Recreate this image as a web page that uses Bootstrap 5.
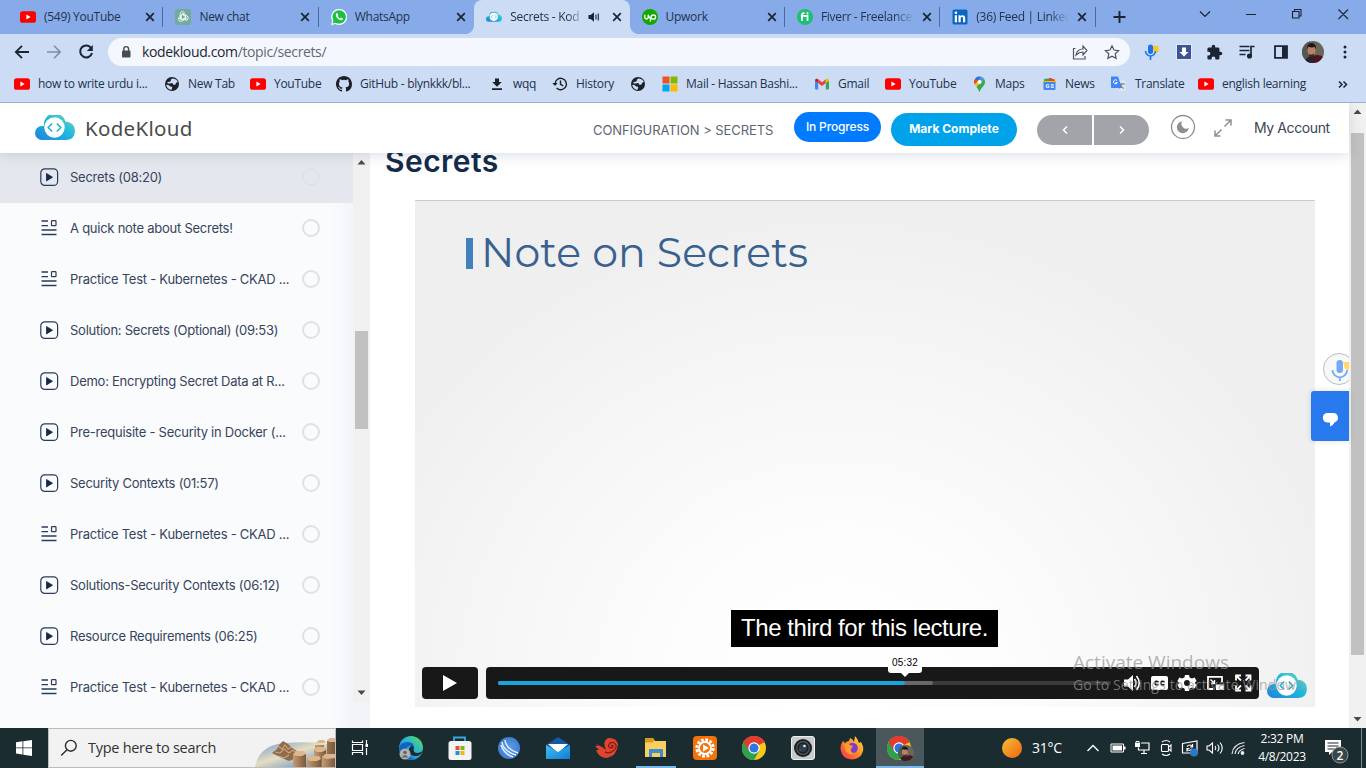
<!DOCTYPE html>
<html lang="en">
<head>
<meta charset="utf-8">
<meta name="viewport" content="width=device-width, initial-scale=1">
<title>Secrets - KodeKloud</title>
<link href="https://cdn.jsdelivr.net/npm/bootstrap@5.3.0/dist/css/bootstrap.min.css" rel="stylesheet">
<style>
body{height:768px;overflow:hidden;font-family:"Noto Sans","Open Sans",sans-serif;font-size:12px;line-height:1;color:#1b2a41}
svg{display:block;flex:none}
.ui{font-family:"Open Sans","Noto Sans",sans-serif;font-size:12px;letter-spacing:-.28px;color:#22324c;white-space:nowrap}
/* browser chrome */
.tabstrip{height:34px;background:#86abe8;padding-left:8px}
.btab{width:155.4px;height:34px;padding-left:12px;position:relative}
.btab .ttl{margin-left:8px;width:93px;overflow:hidden;line-height:20px}
.btab .ttl.short{width:74px}
.btab.sep::after{content:"";position:absolute;right:0;top:7px;width:1px;height:20px;background:#4c6a9c}
.btab.on{background:#ccdcf5;border-radius:8px 8px 0 0}
.btab.on::before,.btab.on::after{content:"";position:absolute;bottom:0;width:8px;height:8px}
.btab.on::before{left:-8px;background:radial-gradient(circle at 0 0,#86abe8 7.5px,#ccdcf5 8px)}
.btab.on::after{right:-8px;background:radial-gradient(circle at 100% 0,#86abe8 7.5px,#ccdcf5 8px)}
.fade-end{-webkit-mask-image:linear-gradient(90deg,#000 78%,transparent)}
.toolbar{height:36px;background:#ccdcf5;display:grid;grid-template-columns:12px 32px 32px 32px 1022px 38px 34px 32px 31px 32px 31px 34px;align-items:center}
.pill{height:28px;background:#f4f8fe;border-radius:14px;padding:0 10px 0 12px}
.url{font-size:14px;margin-left:9px;color:#1d2530;letter-spacing:-.37px}
.url span{color:#5f6875}
.marks{height:33px;background:#ccdcf5;border-bottom:1px solid #9dafcf;display:grid;grid-template-columns:150px 86px 86px 153px 63px 78px 32px 152px 71px 88px 69px 68px 88px 140px 30px;padding:0 0 4px 14px;align-items:center}
.marks>div{display:flex;align-items:center;gap:8px}
/* page */
.page{height:625px;background:#fff}
.sitebar{height:50px;background:#fff;z-index:3;position:relative;box-shadow:0 2px 12px rgba(60,70,110,.18);font-family:Inter,sans-serif}
.brand{font-family:"Noto Sans",sans-serif;font-weight:400;font-size:20.5px;color:#4b4b4d;margin-left:10px;letter-spacing:.3px}
.crumb{font-size:13px;color:#5d6673;width:201px;letter-spacing:-.08px}
.prog{width:87px;height:30px;border-radius:15px;background:#007bff;color:#fff;font-size:12px;font-weight:500;letter-spacing:-.15px;margin:-3px 10px 0 0}
.done{width:126px;height:33px;border-radius:17px;background:#00a3e9;color:#fff;font-size:12px;font-weight:700;margin:2px 20px 0 0}
.pn{width:55px;height:30px;background:#a2a4a9;margin-right:2px}
.acct{font-size:14px;letter-spacing:-.4px;color:#3b4556;margin-left:21px;width:95px}
.side{width:353px;background:#fafbfd;font-family:Inter,sans-serif;font-size:13px;color:#36445c;letter-spacing:-.25px;box-shadow:inset -24px 0 24px -20px rgba(90,100,150,.07)}
.les{height:51px;padding:0 32px 2px 39px}
.les.cur{background:#e4e8ee;height:50px}
.les span{margin-left:11px;width:232px;white-space:nowrap;line-height:18px}
.ring{width:18px;height:18px;border:2px solid #dfe1e5;border-radius:50%}
.track{background:#f1f1f1}
.sthumb{top:178px;left:2px;width:13px;height:98px;background:#c1c1c1}
.pthumb{top:30px;left:2px;width:13px;height:522px;background:#c1c1c1}
.lesson-title{font:600 30px/34px Inter,sans-serif;letter-spacing:.45px;color:#142a49;margin:-9px 0 0 15px;height:34px}
.video{width:900px;height:507px;margin:22px 0 0 45px;border-top:1px solid #cdcdcd;background:radial-gradient(ellipse 520px 480px at 47% 96%,#fff 0,#fdfdfd 30%,#f5f5f5 72%,#efefef 100%)}
.slide-row{padding:26px 0 0 51px}
.slide-h{font:400 41px/50px Montserrat,Inter,sans-serif;letter-spacing:.15px;color:#38618f}
.slidebar{width:7px;height:31px;background:#4280bd;margin:3px 8px 0 0}
.caption-box{left:316px;top:409px;width:267px;height:37px;background:#000;color:#fff;font:24px/35px "Liberation Sans",sans-serif;letter-spacing:-.44px;text-align:center;white-space:nowrap}
.ctl{left:7px;top:466px;right:7px;height:32px}
.ctl .pb{width:56px;height:32px;border-radius:4px;background:#181818}
.ctl .bar{width:773px;height:32px;border-radius:4px;background:#181818;margin-left:8px;padding-left:12px}
.rail{width:613px;height:4px;background:#3b3b3b;border-radius:2px;margin-right:11px}
.rail .buf{width:435px;height:4px;background:#696969;border-radius:2px}
.rail .play{width:407px;height:4px;background:#18a4dc;border-radius:2px}
.tip{left:473px;top:453px;width:34px;height:19px;background:#fff;border-radius:3px;font:10px/18px "Liberation Sans",sans-serif;text-align:center;color:#000;letter-spacing:.2px}
.tip::after{content:"";position:absolute;left:13px;top:19px;border:4px solid transparent;border-top:4px solid #fff;border-bottom:0}
.water{left:1073px;top:652px;z-index:6;color:rgba(150,150,150,.72);font-family:"Open Sans",sans-serif;white-space:nowrap}
.water div:first-child{font-size:19px;line-height:21px}
.water div:last-child{font-size:14px;line-height:24px;letter-spacing:.12px}
.mic{left:1323px;top:353px;width:26px;height:32px;overflow:hidden;z-index:4}
.chatbox{left:1311px;top:391px;width:38px;height:50px;border-radius:3px 0 0 3px;background:#2878ee;z-index:4;box-shadow:0 0 6px rgba(0,0,0,.12)}
/* taskbar */
.taskbar{height:40px;background:#1b2c31;color:#fff}
.find{width:288px;height:40px;background:#f2f2f2;border:1px solid #bdbdbd;padding-left:11px;font-size:14.5px;color:#333}
.apps>div{width:49px;height:40px;display:flex;align-items:center;justify-content:center;position:relative}
.apps .act{width:48px;background:#4a585c}
.apps .act::after,.apps .run::after{content:"";position:absolute;left:0;right:0;bottom:0;height:2px;background:#76b9ed}
.apps .run::after{left:5px;right:4px}
.tray{display:grid;grid-template-columns:24px 25px 24px 24px 24px 25px}
.tray>svg{margin:auto}
</style>
</head>
<body>
<svg width="0" height="0" class="position-absolute">
<defs>
<linearGradient id="cg" x1="0" y1="1" x2="1" y2="0"><stop offset="0" stop-color="#1e82dc"/><stop offset=".55" stop-color="#1fb9dc"/><stop offset="1" stop-color="#7fd8c0"/></linearGradient>
<linearGradient id="sun" x1="0" y1="0" x2="1" y2="1"><stop offset="0" stop-color="#f6bf3a"/><stop offset="1" stop-color="#f0640a"/></linearGradient>
<linearGradient id="edg" x1="0" y1="1" x2="1" y2="0"><stop offset="0" stop-color="#1468c7"/><stop offset=".5" stop-color="#27aee0"/><stop offset="1" stop-color="#5fe04e"/></linearGradient>
<linearGradient id="fox" x1="1" y1="0" x2="0" y2="1"><stop offset="0" stop-color="#ffe14a"/><stop offset=".5" stop-color="#ff8a23"/><stop offset="1" stop-color="#f5245f"/></linearGradient>
<linearGradient id="ml" x1="0" y1="0" x2="1" y2="1"><stop offset="0" stop-color="#3cc3f5"/><stop offset="1" stop-color="#137ad4"/></linearGradient>
<linearGradient id="col" x1="0" x2="1"><stop offset="0" stop-color="#c49c74"/><stop offset="1" stop-color="#7c5737"/></linearGradient>
<linearGradient id="sea" x1="0" y1="0" x2="1" y2="1"><stop offset="0" stop-color="#6c9bd2"/><stop offset=".45" stop-color="#e6ddc0"/><stop offset="1" stop-color="#3f7fd6"/></linearGradient>
<radialGradient id="blu"><stop offset="0" stop-color="#62a0ea"/><stop offset="1" stop-color="#3f7dd0"/></radialGradient>
<symbol id="yt" viewBox="0 0 16 16"><rect y="2.2" width="16" height="11.6" rx="2.6" fill="#f00"/><path d="M6.4 5.6v4.8L10.6 8z" fill="#fff"/></symbol>
<symbol id="x" viewBox="0 0 10 10"><path d="M1.2 1.2l7.6 7.6M8.8 1.2L1.2 8.8" stroke="#1b2433" stroke-width="1.7"/></symbol>
<symbol id="cloud" viewBox="0 0 40 26"><path d="M7 25a7 7 0 0 1 0-14h2a11 11 0 0 1 21.500-4.500q9.500 1 9.500 9.500-.5 8.500-8.500 9z" fill="url(#cg)"/><circle cx="19.500" cy="12.500" r="10.200" fill="#fff"/><path d="M17.200 8.500l-4 4 4 4M21.800 8.500l4 4-4 4" fill="none" stroke="#25b0d8" stroke-width="1.600"/></symbol>
<symbol id="globe" viewBox="0 0 16 16"><circle cx="8" cy="8" r="7" fill="#1d2026"/><path d="M9.500 2.600Q6 3 7 4.600q-.8 1.600-3 1.200L3.200 7Q5 8 7 7.200q2-.4 2 1.300 2.500 1 3-1.200.5-1.300 2-1.300-1-2.700-4.500-3.400zM2.200 9q2-.5 3.200.8 1 1 2.600.8.900 1.300-.8 3.300Q3 13 2.200 9z" fill="#ccdcf5"/></symbol>
<symbol id="chr" viewBox="0 0 24 24"><circle cx="12" cy="12" r="12" fill="#fbc719"/><path d="M12 12L1.600 6A12 12 0 0 1 22.400 6z" fill="#e33b2e"/><path d="M1.600 6A12 12 0 0 0 12 24l5.200-9L12 12z" fill="#2ca24c"/><path d="M1.600 6l5.200 9L12 6.500h10.600L22.400 6A12 12 0 0 0 1.600 6z" fill="#e33b2e"/><circle cx="12" cy="12" r="5.700" fill="#fff"/><circle cx="12" cy="12" r="4.500" fill="#2d76e8"/></symbol>
<symbol id="face" viewBox="0 0 22 22"><clipPath id="fc"><circle cx="11" cy="11" r="11"/></clipPath><g clip-path="url(#fc)"><path d="M0 0h22v22H0z" fill="#6c665a"/><path d="M0 0h8v22H0z" fill="#55584e"/><path d="M2 22q2-7 9-7 8-3 12 3v4z" fill="#4a1622"/><path d="M4 19l4-4 4 4-2 3H4z" fill="#262430"/><ellipse cx="9.500" cy="9.500" rx="4" ry="5.800" fill="#b98267"/><path d="M5.200 8.500Q4.500 2 9.800 2q5 .5 3.900 6.500l-.9-2.500q-3.500 1-6.700-.5z" fill="#1d1919"/><path d="M6.500 13q3 1.500 6-.5-1 4-3 3.800-2 0-3-3.300z" fill="#3b2822"/></g></symbol>
<symbol id="pl" viewBox="0 0 20 20"><rect x="1.800" y="1.800" width="16.800" height="16.600" rx="4" fill="none" stroke="#2a3b5c" stroke-width="1.200"/><path d="M7.500 6.500v7.400l6-3.700z" fill="#142848" stroke="#142848" stroke-width=".8" stroke-linejoin="round"/></symbol>
<symbol id="doc" viewBox="0 0 20 20"><path d="M2.500 3h6.500M2.500 7.600h6.500M2.500 12h15M2.500 16.500h15" stroke="#2a3b5c" stroke-width="1.300" fill="none"/><rect x="12.500" y="2.700" width="4.500" height="5" rx=".8" fill="none" stroke="#2a3b5c" stroke-width="1.200"/></symbol>
</defs>
</svg>

<header>
<div class="tabstrip d-flex ui">
  <div class="btab sep d-flex align-items-center"><svg width="16" height="16"><use href="#yt"/></svg><div class="ttl">(549) YouTube</div><svg width="10" height="10" class="ms-2"><use href="#x"/></svg></div>
  <div class="btab sep d-flex align-items-center"><svg width="16" height="16" viewBox="0 0 16 16"><rect width="16" height="16" rx="2" fill="#74aa9c"/><g fill="none" stroke="#f4fffb" stroke-width=".8"><path d="M5 9.500V5a2.500 2.500 0 0 1 4.600-1.200L6.300 5.700v4.200l1.700 1 3.500-2"/><path d="M5 9.500V5a2.500 2.500 0 0 1 4.600-1.200L6.300 5.700v4.200l1.700 1 3.500-2" transform="rotate(120 8 8)"/><path d="M5 9.500V5a2.500 2.500 0 0 1 4.600-1.200L6.300 5.700v4.200l1.700 1 3.500-2" transform="rotate(240 8 8)"/></g></svg><div class="ttl">New chat</div><svg width="10" height="10" class="ms-2"><use href="#x"/></svg></div>
  <div class="btab d-flex align-items-center"><svg width="16" height="16" viewBox="0 0 16 16"><path d="M0 16l1.200-4.200A8 8 0 1 1 4.500 15z" fill="#fff"/><path d="M1.500 14.500l.9-3.200A6.700 6.700 0 1 1 4.800 13.700z" fill="#19c245"/><path d="M5.300 4.200l1.200.1.800 1.900-.7.900q.8 1.600 2.400 2.300l.9-1 1.900.9v1.300c-1.200 1.300-3.300.7-5.100-1S4.200 5.500 5.300 4.200z" fill="#fff"/></svg><div class="ttl">WhatsApp</div><svg width="10" height="10" class="ms-2"><use href="#x"/></svg></div>
  <div class="btab on d-flex align-items-center"><svg width="16" height="12" viewBox="0 0 40 26"><use href="#cloud"/></svg><div class="ttl short fade-end">Secrets - Kod</div><svg width="12" height="12" viewBox="0 0 12 12" class="ms-1"><path d="M.5 4h2.200L6 1.200v9.600L2.700 8H.5z" fill="#1b2433"/><path d="M8 3.500v5M10.300 2.500v7" stroke="#1b2433" stroke-width="1.100"/></svg><svg width="10" height="10" class="ms-auto me-2"><use href="#x"/></svg></div>
  <div class="btab sep d-flex align-items-center"><svg width="16" height="16" viewBox="0 0 16 16"><circle cx="8" cy="8" r="8" fill="#14a800"/><path d="M2.800 5.800v2.500a1.700 1.700 0 0 0 3.400 0V5.800q1 3.500 3 4.500M8.200 12.500l1-4.500a2.200 2.200 0 1 1 2.200 2.200q-1.500 0-3-2" fill="none" stroke="#fff" stroke-width="1.300"/></svg><div class="ttl">Upwork</div><svg width="10" height="10" class="ms-2"><use href="#x"/></svg></div>
  <div class="btab sep d-flex align-items-center"><svg width="16" height="16" viewBox="0 0 16 16"><circle cx="8" cy="8" r="8" fill="#1dbf73"/><path d="M5 12V6q0-2 2.500-1.800M3.800 6.800h6.700V12" fill="none" stroke="#fff" stroke-width="1.800"/><circle cx="10.500" cy="4.300" r="1.100" fill="#fff"/></svg><div class="ttl fade-end">Fiverr - Freelance</div><svg width="10" height="10" class="ms-2"><use href="#x"/></svg></div>
  <div class="btab sep d-flex align-items-center"><svg width="16" height="16" viewBox="0 0 16 16"><rect x=".5" y=".5" width="15" height="15" rx="1.500" fill="#0a66c2"/><path d="M2.800 6.200H5v7H2.800zM6.500 6.200h2v1c.8-1.500 4.700-1.800 4.700 1.600v4.400H11V9.500c0-2-2.300-1.900-2.300 0v3.700H6.500z" fill="#fff"/><circle cx="3.900" cy="3.800" r="1.300" fill="#fff"/></svg><div class="ttl fade-end">(36) Feed | Linked</div><svg width="10" height="10" class="ms-2"><use href="#x"/></svg></div>
  <svg width="262" height="34" viewBox="-3 0 262 34" fill="none" stroke="#1b2433"><path d="M14.500 17h12M20.500 11v12" stroke-width="1.900"/><path d="M101 11.500l5 5 5-5M147 14.500h10M193.500 11.500h6.500v6.500h-6.500zM195.500 11.500v-2h6.500v6.500h-2M239.500 9.500l9.500 9.500M249 9.500L239.500 19" stroke-width="1.100"/></svg>
</div>
<div class="toolbar ui">
  <span></span>
  <svg width="20" height="20" viewBox="0 0 20 20" fill="none" stroke="#1b2433" stroke-width="1.800"><path d="M17 10H4M10 3.800L3.800 10l6.200 6.200"/></svg>
  <svg width="20" height="20" viewBox="0 0 20 20" fill="none" stroke="#7f8ca4" stroke-width="1.600"><path d="M3 10h13M10 3.800l6.200 6.200-6.200 6.200"/></svg>
  <svg width="20" height="20" viewBox="0 0 20 20"><path d="M15.300 6.300A6 6 0 1 0 16 11" fill="none" stroke="#1b2433" stroke-width="2"/><path d="M16.800 3v6h-6z" fill="#1b2433"/></svg>
  <div class="pill d-flex align-items-center">
    <svg width="13" height="14" viewBox="0 0 13 14"><rect x="2" y="5.500" width="8.500" height="7" rx="1" fill="#474c55"/><path d="M3.800 6V4a2.400 2.400 0 0 1 4.800 0v2" fill="none" stroke="#474c55" stroke-width="1.400"/></svg>
    <span class="url">kodekloud.com<span>/topic/secrets/</span></span>
    <svg width="50" height="18" viewBox="0 0 50 18" class="ms-auto" fill="none" stroke="#4d535e" stroke-width="1.200"><path d="M5.500 5.500H3.500v10.500h11.500v-3M6 12q1-6 7-6V3l4 4.500-4 4.500V9q-4 0-7 3z"/><path d="M42 2.800l2 4.200 4.600.6-3.400 3.200.9 4.600-4.100-2.200-4.100 2.200.9-4.600L35.400 7.600l4.600-.6z"/></svg>
  </div>
  <svg width="18" height="18" viewBox="0 0 18 18" class="ms-auto me-2"><path d="M10.500 3h6v6l-3 0-3-2z" fill="#ffc61a"/><rect x="6" y="1.500" width="5" height="9.500" rx="2.500" fill="#1a73e8"/><path d="M3.500 8a5 5 0 0 0 10 0M8.500 13v4" stroke="#1a73e8" stroke-width="1.600" fill="none"/></svg>
  <svg width="16" height="16" viewBox="0 0 16 16" class="my-auto ms-2"><rect x=".5" y=".5" width="15" height="15" fill="#3c5491" stroke="#dfe8f7"/><path d="M6 3.500h4V8h2.500L8 12.500 3.500 8H6z" fill="#fff"/></svg>
  <svg width="17" height="17" viewBox="0 0 24 24" class="my-auto ms-1"><path d="M20.500 11H19V7a2 2 0 0 0-2-2h-4V3.500a2.500 2.500 0 0 0-5 0V5H4a2 2 0 0 0-2 2v3.800h1.500a2.700 2.700 0 0 1 0 5.400H2V20a2 2 0 0 0 2 2h3.800v-1.500a2.700 2.700 0 0 1 5.400 0V22H17a2 2 0 0 0 2-2v-4h1.500a2.500 2.500 0 0 0 0-5z" fill="#1b2433"/></svg>
  <svg width="18" height="16" viewBox="0 0 18 16" class="my-auto ms-1" fill="none" stroke="#1b2433" stroke-width="1.700"><path d="M1.500 2.500h10M1.500 6.500h10M1.500 10.500h6M13 12V2.500h3.500"/><circle cx="11.500" cy="12" r="1.700" fill="#1b2433"/></svg>
  <svg width="16" height="16" viewBox="0 0 16 16" class="m-auto"><path d="M2 2.200h12v11.600H2z" fill="none" stroke="#1b2433" stroke-width="1.800"/><path d="M9 2h5v12H9z" fill="#1b2433"/></svg>
  <svg width="22" height="22" class="m-auto"><use href="#face"/></svg>
  <svg width="6" height="16" viewBox="0 0 6 16" class="m-auto" fill="#1b2433"><circle cx="3" cy="3" r="1.500"/><circle cx="3" cy="8" r="1.500"/><circle cx="3" cy="13" r="1.500"/></svg>
</div>
<div class="marks ui">
  <div><svg width="16" height="16"><use href="#yt"/></svg>how to write urdu i...</div>
  <div><svg width="16" height="16"><use href="#globe"/></svg>New Tab</div>
  <div><svg width="16" height="16"><use href="#yt"/></svg>YouTube</div>
  <div><svg width="16" height="16" viewBox="0 0 16 16"><path d="M8 0C3.580 0 0 3.580 0 8c0 3.540 2.290 6.530 5.470 7.590.4.070.55-.17.55-.38v-1.490c-2.010.37-2.530-.49-2.690-.94-.09-.23-.48-.94-.82-1.130-.28-.15-.68-.52-.01-.53.630-.01 1.080.58 1.230.82.720 1.210 1.870.87 2.330.66.070-.52.280-.87.510-1.070-1.780-.2-3.640-.89-3.640-3.950 0-.87.310-1.590.82-2.150-.08-.2-.36-1.020.08-2.120 0 0 .67-.21 2.200.82a7.500 7.500 0 0 1 4 0c1.530-1.040 2.200-.82 2.200-.82.440 1.100.16 1.920.08 2.120.51.560.82 1.270.82 2.150 0 3.070-1.870 3.750-3.650 3.950.29.250.54.730.54 1.480v2.190c0 .21.150.46.55.38A8 8 0 0 0 16 8c0-4.420-3.580-8-8-8z" fill="#1b2027"/></svg>GitHub - blynkkk/bl...</div>
  <div><svg width="16" height="16" viewBox="0 0 16 16"><path d="M6 2.500h4v3.500h2.800L8 10.800 3.200 6H6zM3 12.300h10V14H3z" fill="#1b2027"/></svg>wqq</div>
  <div><svg width="16" height="16" viewBox="0 0 16 16"><path d="M3 8a5.700 5.700 0 1 1 1.600 4M8.500 4.500V8.300l2.700 1.600" fill="none" stroke="#1b2027" stroke-width="1.400"/><path d="M.3 7h5.400L3 10z" fill="#1b2027"/></svg>History</div>
  <div><svg width="16" height="16"><use href="#globe"/></svg></div>
  <div><svg width="16" height="16" viewBox="0 0 16 16"><path d="M.5.5h7v7h-7z" fill="#f25022"/><path d="M8.500.5h7v7h-7z" fill="#7fba00"/><path d="M.5 8.500h7v7h-7z" fill="#00a4ef"/><path d="M8.500 8.500h7v7h-7z" fill="#ffb900"/></svg>Mail - Hassan Bashi...</div>
  <div><svg width="16" height="16" viewBox="0 0 16 16"><path d="M1 4.500l3.200 2.300V13.500H2a1 1 0 0 1-1-1z" fill="#4285f4"/><path d="M15 4.500l-3.200 2.300v6.700H14a1 1 0 0 0 1-1z" fill="#34a853"/><path d="M4.200 3.300v3.800L8 10l3.800-2.900V3.300L8 6.200z" fill="#ea4335"/><path d="M1 4.500C1 2.700 2.800 2.200 4.200 3.300v3.800L1 4.800z" fill="#c5221f"/><path d="M15 4.500c0-1.800-1.800-2.300-3.200-1.200v3.800L15 4.800z" fill="#fbbc04"/></svg>Gmail</div>
  <div><svg width="16" height="16"><use href="#yt"/></svg>YouTube</div>
  <div class="gap-2"><svg width="14" height="16" viewBox="0 0 14 16"><path d="M6.500.5a5.300 5.300 0 0 0-4.200 2L6.500 6z" fill="#1a73e8"/><path d="M2.300 2.500A5.500 5.500 0 0 0 1.500 8L6.500 6z" fill="#ea4335"/><path d="M1.500 8q.8 1.700 2 3L11 2.800A5.400 5.400 0 0 0 6.500.5q-2 2-5 7.500z" fill="#fbbc04"/><path d="M1.200 6q0-2 1.200-3.500L5 5 1.700 8q-.5-1-.5-2z" fill="#ea4335"/><path d="M2.400 2.500A5.300 5.300 0 0 1 8 .7L5 5z" fill="#1a73e8"/><path d="M11 2.800L3.500 11q2.300 2.600 2.500 4.200.5 1 1 0C7.500 12 12 10 12 6q0-1.800-1-3.200z" fill="#34a853"/><path d="M8 .7q2 .5 3 2.100L7.500 6.300 5.500 4z" fill="#4a90f0"/><circle cx="6.600" cy="5.900" r="2" fill="#fff"/></svg>Maps</div>
  <div><svg width="15" height="16" viewBox="0 0 15 16"><path d="M2 3l8-1v4H2z" fill="#34a853"/><path d="M7 2l6 1.500L12 7H7z" fill="#ea4335"/><path d="M1 5h13v3H1z" fill="#fbbc04"/><rect x="1.500" y="6" width="12" height="8" rx="1" fill="#4285f4"/><path d="M7 8.800H4.300v2.500H7v-1.200H5.800M8.800 8.700h3M8.800 10h3M8.800 11.400h3" stroke="#fff" fill="none" stroke-width=".9"/></svg>News</div>
  <div><svg width="17" height="16" viewBox="0 0 17 16"><path d="M6 4h9a1 1 0 0 1 1 1v9a1 1 0 0 1-1 1H9z" fill="#dfe3ea"/><path d="M9 8h6M12 7v1q-.5 3-3 4.500M10 9q1 2.500 4 3.500" stroke="#6a7890" stroke-width=".9" fill="none"/><path d="M1 .5h7L12 12H2a1 1 0 0 1-1-1z" fill="#4285f4"/><path d="M7 4.500a2 2 0 1 0 .4 2H5.600" stroke="#fff" fill="none" stroke-width="1"/></svg>Translate</div>
  <div><svg width="16" height="16"><use href="#yt"/></svg>english learning</div>
  <svg width="10" height="9" viewBox="0 0 10 9" fill="none" stroke="#1b2433" stroke-width="1.500"><path d="M1 1.500l3 3-3 3M5.500 1.500l3 3-3 3"/></svg>
</div>
</header>

<main class="page d-flex overflow-hidden">
  <div class="d-flex flex-column" style="width:1349px">
    <nav class="sitebar d-flex align-items-center flex-shrink-0">
      <svg width="40" height="26" style="margin-left:35px"><use href="#cloud"/></svg>
      <span class="brand">KodeKloud</span>
      <span class="crumb ms-auto text-nowrap pt-1">CONFIGURATION &gt; SECRETS</span>
      <div class="prog d-flex align-items-center justify-content-center">In Progress</div>
      <div class="done d-flex align-items-center justify-content-center">Mark Complete</div>
      <div class="pn rounded-start-pill d-flex align-items-center justify-content-center mt-1"><svg width="6" height="10" viewBox="0 0 6 10"><path d="M5 1.500L1.500 5 5 8.500" fill="none" stroke="#fff" stroke-width="1.500"/></svg></div>
      <div class="pn rounded-end-pill d-flex align-items-center justify-content-center mt-1"><svg width="6" height="10" viewBox="0 0 6 10"><path d="M1 1.500L4.500 5 1 8.500" fill="none" stroke="#fff" stroke-width="1.500"/></svg></div>
      <svg width="26" height="26" viewBox="0 0 26 26" style="margin:-3px 0 0 19px"><circle cx="13" cy="13" r="11.500" fill="none" stroke="#8d8f92" stroke-width="1.300"/><path d="M12 7.300A6 6 0 1 0 18.800 14 5 5 0 0 1 12 7.300z" fill="#8d8f92"/></svg>
      <svg width="20" height="20" viewBox="0 0 20 20" style="margin:0 0 0 17px" fill="none" stroke="#8d8f92" stroke-width="1.500"><path d="M11.500 8.500L18 2M12.500 2H18v5.500M8.500 11.500L2 18M2 12.500V18h5.500"/></svg>
      <span class="acct">My Account</span>
    </nav>
    <div class="d-flex flex-grow-1">
      <aside class="side flex-shrink-0">
        <div class="les cur d-flex align-items-center"><svg width="20" height="20"><use href="#pl"/></svg><span>Secrets (08:20)</span><i class="ring"></i></div>
        <div class="les d-flex align-items-center"><svg width="20" height="20"><use href="#doc"/></svg><span>A quick note about Secrets!</span><i class="ring"></i></div>
        <div class="les d-flex align-items-center"><svg width="20" height="20"><use href="#doc"/></svg><span>Practice Test - Kubernetes - CKAD ...</span><i class="ring"></i></div>
        <div class="les d-flex align-items-center"><svg width="20" height="20"><use href="#pl"/></svg><span>Solution: Secrets (Optional) (09:53)</span><i class="ring"></i></div>
        <div class="les d-flex align-items-center"><svg width="20" height="20"><use href="#pl"/></svg><span>Demo: Encrypting Secret Data at R...</span><i class="ring"></i></div>
        <div class="les d-flex align-items-center"><svg width="20" height="20"><use href="#pl"/></svg><span>Pre-requisite - Security in Docker (...</span><i class="ring"></i></div>
        <div class="les d-flex align-items-center"><svg width="20" height="20"><use href="#pl"/></svg><span>Security Contexts (01:57)</span><i class="ring"></i></div>
        <div class="les d-flex align-items-center"><svg width="20" height="20"><use href="#doc"/></svg><span>Practice Test - Kubernetes - CKAD ...</span><i class="ring"></i></div>
        <div class="les d-flex align-items-center"><svg width="20" height="20"><use href="#pl"/></svg><span>Solutions-Security Contexts (06:12)</span><i class="ring"></i></div>
        <div class="les d-flex align-items-center"><svg width="20" height="20"><use href="#pl"/></svg><span>Resource Requirements (06:25)</span><i class="ring"></i></div>
        <div class="les d-flex align-items-center"><svg width="20" height="20"><use href="#doc"/></svg><span>Practice Test - Kubernetes - CKAD ...</span><i class="ring"></i></div>
      </aside>
      <div class="position-relative flex-shrink-0" style="width:17px;background:#f3f4f8">
        <div class="track" style="height:549px"></div>
        <div class="sthumb position-absolute"></div>
        <svg class="position-absolute top-0 start-0" width="17" height="549" fill="#4a4a4a"><path d="M4.500 11.500h8l-4-4.500zM4.500 537.500h8l-4 4.500z"/></svg>
      </div>
      <section>
        <h1 class="lesson-title">Secrets</h1>
        <div class="video position-relative">
          <div class="slide-row d-flex align-items-center"><div class="slidebar"></div><div class="slide-h">Note on Secrets</div></div>
          <div class="caption-box position-absolute">The third for this lecture.</div>
          <div class="ctl position-absolute d-flex">
            <div class="pb d-flex align-items-center justify-content-center"><svg width="16" height="18" viewBox="0 0 16 18"><path d="M1 1v16l14-8z" fill="#fff"/></svg></div>
            <div class="bar d-flex align-items-center">
              <div class="rail"><div class="buf"><div class="play"></div></div></div>
              <svg width="136" height="22" viewBox="0 0 136 22" fill="#fff"><path d="M2 7.500h4L11 3v16l-5-4.500H2z"/><path d="M12.500 7q3 4 0 8M14.500 4q5.500 7 0 14" fill="none" stroke="#fff" stroke-width="1.600"/><rect x="29" y="4" width="17" height="14" rx="2"/><path d="M36.500 9.700q-3.500-1.500-3.500 1.300t3.500 1.500M42.500 9.700q-3.500-1.500-3.500 1.300t3.500 1.500" fill="none" stroke="#181818" stroke-width="1.500"/><path fill-rule="evenodd" d="M63 3h4l.6 2.600 2.400 1 2.600-1 2 3.400-1.900 2 1.900 2-2 3.400-2.600-1-2.400 1L67 19h-4l-.6-2.600-2.400-1-2.600 1-2-3.400 1.900-2-1.900-2 2-3.400 2.600 1 2.400-1zM65 8a3 3 0 1 0 0 6 3 3 0 0 0 0-6z"/><path d="M86 17.500V4.800h14V10M86 17h5" fill="none" stroke="#fff" stroke-width="1.800"/><path d="M94 12.500h8V18h-8z"/><path d="M88.500 7.500l4 4M92.500 8v3.500H89" fill="none" stroke="#fff" stroke-width="1.400"/><path d="M114 8.500v-5h5M123.500 3.500h5v5M114 13.500v5h5M128.500 13.500v5h-5M114 3.500l5 5M128.500 3.500l-5 5M114 18.500l5-5M128.500 18.500l-5-5" fill="none" stroke="#fff" stroke-width="1.800"/></svg>
            </div>
            <svg width="40" height="26" style="margin:6px 0 0 8px"><use href="#cloud"/></svg>
          </div>
          <div class="tip position-absolute">05:32</div>
        </div>
      </section>
    </div>
  </div>
  <div class="track position-relative" style="width:17px">
    <div class="pthumb position-absolute"></div>
    <svg class="position-absolute top-0 start-0" width="17" height="625" fill="#4a4a4a"><path d="M4.500 11h8l-4-4.500zM4.500 614h8l-4 4.500z"/></svg>
  </div>
</main>
<svg class="mic position-absolute" viewBox="0 0 26 32"><circle cx="16" cy="16" r="15.500" fill="#f8f8f8" stroke="#b9bcc2"/><path d="M20 9h7v8l-5-1z" fill="#ffd966"/><rect x="13.500" y="7" width="6.500" height="13" rx="3.200" fill="#72aaf5"/><path d="M9.500 17a7.300 7.300 0 0 0 14.600 0M16.800 23.500V28" stroke="#72aaf5" stroke-width="1.800" fill="none"/></svg>
<div class="chatbox position-absolute d-flex align-items-center justify-content-center"><svg width="18" height="16" viewBox="0 0 18 16" class="mt-2"><path d="M6 1h6a4.800 4.800 0 0 1 1.500 9.400Q12 13.500 9 14.500v-4H6A4.800 4.800 0 0 1 6 1z" fill="#fff"/></svg></div>
<div class="water position-absolute"><div>Activate Windows</div><div>Go to Settings to activate Windows.</div></div>

<footer class="taskbar d-flex">
  <div class="d-flex align-items-center justify-content-center" style="width:48px"><svg width="16" height="16" viewBox="0 0 16 16" fill="#fff"><path d="M0 2.200L6.500 1.300v6.200H0zM7.300 1.200L16 0v7.500H7.300zM0 8.300h6.500v6.200L0 13.600zM7.300 8.300H16V16l-8.700-1.200z"/></svg></div>
  <div class="find d-flex align-items-center ui">
    <svg width="18" height="18" viewBox="0 0 18 18" fill="none" stroke="#2b2b2b" stroke-width="1.400"><circle cx="10.800" cy="6.800" r="5.400"/><path d="M7 10.700L1.200 16.500"/></svg>
    <span style="margin-left:10px">Type here to search</span>
    <svg width="80" height="38" viewBox="0 0 80 38" class="ms-auto"><path d="M0 38Q4 16 30 14 58 12 80 16V38z" fill="url(#sea)"/><path d="M17 24l5-4 2-4 4-4 5 3 3 3 9 6-1 4-10 4-5-2z" fill="#8f6b4b"/><path d="M23 17l4 3 3-4 3 4 4-2M20 23l5 1 4-4 5 4 4-3 5 4M24 27l5 2 5-3" stroke="#c9a27b" stroke-width="1.200" fill="none"/><path d="M60 16h9v22h-9zM72 12h8v26h-8z" fill="url(#col)"/><path d="M59 20h12v18H59z" fill="url(#col)"/><path d="M38 25h13v13H38z" fill="url(#col)"/><path d="M52 29h14v9H52z" fill="url(#col)"/><path d="M67 27h13v11H67z" fill="url(#col)"/><g fill="#dcb78d"><path d="M38 25l3-3h8l2 3-4 2h-6zM52 30l3-3h9l2 3-4 2h-7zM59 21l3-3h7l2 3-4 2h-5zM67 28l3-3h10v4l-8 1zM61 14l3-3h5l2 3zM72 11l3-2h5v4h-6z"/></g></svg>
  </div>
  <svg width="50" height="40" viewBox="0 0 50 40" fill="none" stroke="#fff" stroke-width="1.200"><path d="M16.500 12.500v2h10v-2M16.500 16.500h10v6h-10zM16.500 27v-2.500h10V27M30.500 12v4M30.500 20v7"/><path d="M29.500 16h2.500v3h-2.500z" fill="#fff" stroke="none"/></svg>
  <div class="apps d-flex">
    <div><svg width="24" height="24" viewBox="0 0 24 24"><circle cx="12" cy="12" r="12" fill="url(#edg)"/><path d="M0 13q1-7 9-7 6 0 6 6-1-2-4-2-4 0-4 5 0 5 8 8Q3 26 0 13z" fill="#1361c0"/><path d="M15 12q-2 5 4 5 3 0 5-3-2 6-7 6-7 0-7-6 0-4 4-4z" fill="#1b2c31"/><circle cx="6" cy="18" r="5.500" fill="#aeb2b5"/><circle cx="6" cy="16.500" r="1.800" fill="#666"/><path d="M2.500 21.500q3.500-5 7 0z" fill="#666"/></svg></div>
    <div><svg width="24" height="24" viewBox="0 0 24 24"><path d="M6 6V1.500h11V6" fill="none" stroke="#35a8df" stroke-width="1.800"/><rect x=".5" y="5" width="23" height="19" rx="2.500" fill="#f2f3f4"/><path d="M7.500 10h4v4h-4z" fill="#e84e29"/><path d="M12.500 10h4v4h-4z" fill="#7cb71b"/><path d="M7.500 15h4v4h-4z" fill="#2090d0"/><path d="M12.500 15h4v4h-4z" fill="#f6b413"/></svg></div>
    <div><svg width="24" height="24" viewBox="0 0 24 24"><circle cx="12" cy="12" r="11" fill="url(#blu)"/><path d="M5 6q1 9 14 13M8 4q1 9 13 13M4 9q3 9 12 12" fill="none" stroke="#e6f1fc" stroke-width="1.500"/></svg></div>
    <div><svg width="24" height="24" viewBox="0 0 24 24"><path d="M0 9l12-8 12 8v4H0z" fill="#1359a8"/><path d="M2 8h20L12 17z" fill="#fff"/><path d="M0 9l12 7 12-7v14H0z" fill="url(#ml)"/></svg></div>
    <div><svg width="24" height="22" viewBox="0 0 24 22"><path d="M0 9l3 0-2-2 6 3q2 1 4 3-4-9 2-12 8-1 10 6-1 12-11 14Q4 21 1 13l3 0z" fill="#e0442f"/><path d="M10 15q4 2 8-1 4-3 3-6-2-4-6-2-3 3 0 5 3 0 3-2-1-1-2 0" fill="none" stroke="#7e1c18" stroke-width="1.200"/></svg></div>
    <div class="run"><svg width="24" height="22" viewBox="0 0 24 22"><path d="M1 1h8l2 3h11v16H1z" fill="#f9cf5f"/><path d="M1 1h8l1.500 2.500-2 2H1z" fill="#d99b1c"/><path d="M5 12h14v8h-3v-4H8v4H5z" fill="#3b8ed0"/></svg></div>
    <div><svg width="24" height="24" viewBox="0 0 24 24"><rect width="24" height="24" rx="4" fill="#f37209"/><circle cx="12" cy="12" r="8.200" fill="none" stroke="#fff" stroke-width="3" stroke-dasharray="2.700 1.600"/><circle cx="12" cy="12" r="6" fill="none" stroke="#fff" stroke-width="1.800"/><path d="M10 8.500v7l6-3.500z" fill="#fff"/></svg></div>
    <div><svg width="24" height="24"><use href="#chr"/></svg></div>
    <div><svg width="24" height="24" viewBox="0 0 24 24"><rect x=".5" y=".5" width="23" height="23" rx="2.500" fill="#c8cacc" stroke="#eee"/><circle cx="12" cy="12" r="9" fill="#1c2023"/><circle cx="12" cy="12" r="6.300" fill="none" stroke="#4d5b60" stroke-width="1.200"/><circle cx="12" cy="12" r="4" fill="#25434c"/><circle cx="13.500" cy="10" r="1.300" fill="#dfeef0"/><circle cx="9" cy="14" r="1" fill="#c23"/></svg></div>
    <div><svg width="24" height="24" viewBox="0 0 24 24"><path d="M3 5l2 2q2-2 4-2l1-3q3 1 4 4l1-6q3 3 4 7l2-1q3 5 2 9-2 8-11 8.500Q2 23 .7 14 0 9 3 5z" fill="url(#fox)"/><circle cx="12.500" cy="12" r="5.300" fill="#7b3cd6"/><path d="M4 8q4-1 6 1l3 1-2 3q-1 4 4 4-6 3-9-1z" fill="#ff9a2b"/></svg></div>
    <div class="act"><svg width="28" height="28" viewBox="0 0 28 28"><svg x="1" y="2" width="24" height="24"><use href="#chr"/></svg><svg x="12" y="11" width="16" height="16"><use href="#face"/></svg></svg></div>
  </div>
  <div class="d-flex align-items-center ms-auto">
    <svg width="20" height="20" viewBox="0 0 20 20"><circle cx="10" cy="10" r="10" fill="url(#sun)"/></svg>
    <span class="ui text-white" style="margin-left:10px;width:49px;font-size:14px">31°C</span>
    <div class="tray">
      <svg width="14" height="8" viewBox="0 0 14 8"><path d="M1.500 7L7 1.500 12.500 7" fill="none" stroke="#fff" stroke-width="1.300"/></svg>
      <svg width="16" height="10" viewBox="0 0 16 10"><path d="M1 1h12.500v8H1z" fill="none" stroke="#fff"/><path d="M2.500 2.500h9.500v5H2.500zM14 3.500h1.500v3H14z" fill="#fff"/></svg>
      <svg width="16" height="16" viewBox="0 0 16 16"><path d="M7 3h8v7H4.500V7.500M10 10v3.500M7 13.500h6" fill="none" stroke="#fff" stroke-width="1.200"/><path d="M1 3h5v4H1z" fill="#fff"/><path d="M2 3V1.500h3V3" fill="none" stroke="#fff"/></svg>
      <svg width="16" height="18" viewBox="0 0 16 18" fill="none" stroke="#fff" stroke-width="1.100"><rect x="3.500" y="5.500" width="7" height="7" rx="1"/><path d="M10.500 8l2.500-2v6l-2.500-2M4 3q4-3 8 0M4 15q4 3 8 0"/></svg>
      <svg width="18" height="18" viewBox="0 0 18 18" fill="none" stroke="#fff" stroke-width="1.200"><path d="M1.500 4.500L16 2v12H1.500zM6 7.500q3-3 5.500 0M11.500 5v3H9M11 10q-3 3-5 0M6 12.500v-3h2.500"/><circle cx="13" cy="13.500" r="4" fill="#2e78c8" stroke="none"/></svg>
      <svg width="18" height="14" viewBox="0 0 18 14" fill="none" stroke="#fff" stroke-width="1.100"><path d="M1 5h2l3.500-3v10L3 9H1zM9 5q1.500 2 0 4M11.500 3.500q3 3.500 0 7M14 1.500q4.500 5.500 0 11"/></svg>
      </div>
    <svg width="16" height="16" viewBox="0 0 16 16" fill="none" stroke="#dfe5e6" stroke-width="1.200" style="margin-left:4px"><path d="M1 14Q2 4 13.500 2.500M4 14q1-7 9.500-8.500M7 14q1-4 6.500-5.500"/><circle cx="11.500" cy="13" r="1.300" fill="#fff"/></svg>
    <div class="ui text-white text-center" style="width:68px;line-height:18px;margin-left:1px">2:32 PM<br>4/8/2023</div>
    <svg width="46" height="40" viewBox="0 0 46 40" style="margin-left:4px"><path d="M5 12h16v12H12l-3 3v-3H5z" fill="#fff"/><path d="M7.500 15h11M7.500 18h11M7.500 21h7" stroke="#1b2c31" stroke-width="1.200"/><circle cx="20" cy="27" r="8" fill="#3b4649" stroke="#8a9396"/><text x="20" y="31.500" fill="#fff" font-family="Open Sans" font-size="12" font-weight="600" text-anchor="middle">2</text><path d="M41.500 0v40" stroke="#7b8789"/></svg>
  </div>
</footer>
<script src="https://cdn.jsdelivr.net/npm/bootstrap@5.3.0/dist/js/bootstrap.bundle.min.js"></script>
</body>
</html>
